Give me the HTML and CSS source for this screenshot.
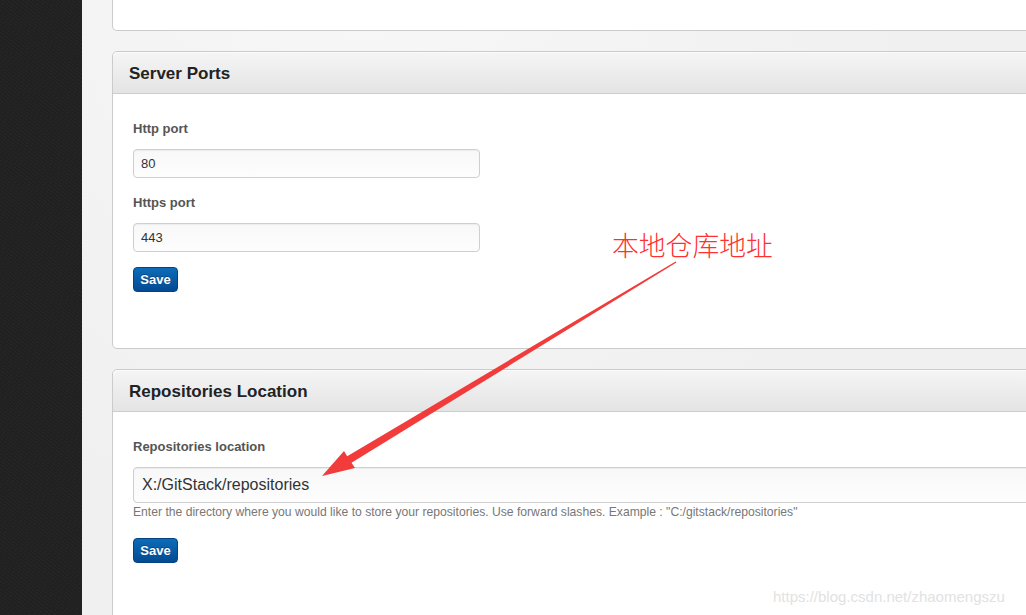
FILE: index.html
```html
<!DOCTYPE html>
<html lang="en">
<head>
    <meta charset="UTF-8">
    <title>GitStack - Settings</title>
    <link rel="stylesheet" href="styles.css">
</head>
<body>

    <div class="sidebar"></div>

    <div class="main">
        <!-- bottom of the previous panel -->
        <div class="panel panel-cut"></div>

        <div class="panel">
            <div class="panel-header">Server Ports</div>
            <div class="panel-body">
                <label class="field-label">Http port</label>
                <input class="field" type="text" value="80">
                <label class="field-label">Https port</label>
                <input class="field" type="text" value="443">
                <button class="button">Save</button>
            </div>
        </div>

        <div class="panel">
            <div class="panel-header">Repositories Location</div>
            <div class="panel-body">
                <label class="field-label">Repositories location</label>
                <input class="field field-large" type="text" value="X:/GitStack/repositories">
                <p class="help">Enter the directory where you would like to store your repositories. Use forward slashes. Example : "C:/gitstack/repositories"</p>
                <button class="button">Save</button>
            </div>
        </div>
    </div>

    <!-- screenshot annotation -->
    <div class="note">本地仓库地址</div>
    <svg class="arrow" width="1026" height="615" viewBox="0 0 1026 615">
        <polygon fill="#f23b3b" points="322,476 355,468 351.5,462.8 676.4,262.6 675.6,261.4 347.2,456.2 344,451"/>
    </svg>
    <div class="watermark">https://blog.csdn.net/zhaomengszu</div>

</body>
</html>
```

FILE: styles.css
```css
body {
    font-family: 'Liberation Sans', Arial, sans-serif;
    margin: 0;
    height: 100vh;
    display: flex;
    overflow: hidden;
    background-color: #f1f1f1;
}

.sidebar {
    width: 82px;
    flex-shrink: 0;
    background-color: #222;
    background-image:
        repeating-linear-gradient(37deg, rgba(255,255,255,0.018) 0 1px, transparent 1px 3px),
        repeating-linear-gradient(-61deg, rgba(0,0,0,0.08) 0 1px, transparent 1px 2px);
}

.main {
    flex: 1;
    padding-left: 30px;
    overflow: hidden;
    background: radial-gradient(circle at 30% 0, #f7f7f7, #f0f0f0 60%);
}

.panel {
    width: 1000px;
    background-color: #fff;
    border: 1px solid #cbcbcb;
    border-radius: 5px;
    margin-bottom: 20px;
}

.panel-cut {
    height: 30px;
    border-top: none;
    border-top-left-radius: 0;
    border-top-right-radius: 0;
}

.panel-header {
    height: 41px;
    line-height: 43px;
    padding-left: 16px;
    border-bottom: 1px solid #cdcdcd;
    border-radius: 5px 5px 0 0;
    background: linear-gradient(#f5f5f5, #e4e4e4);
    box-shadow: inset 0 1px 0 #fbfbfb;
    font-size: 17px;
    font-weight: bold;
    color: #222;
}

.panel-body {
    padding: 26px 20px 56px 20px;
}

.field-label {
    display: block;
    font-size: 13px;
    line-height: 18px;
    font-weight: bold;
    color: #555;
    margin-bottom: 11px;
}

.field {
    display: block;
    box-sizing: border-box;
    width: 347px;
    height: 29px;
    padding: 0 7px;
    margin: 0 0 16px 0;
    border: 1px solid #cfcfcf;
    border-radius: 4px;
    background: linear-gradient(#f8f8f8, #fdfdfd);
    box-shadow: inset 0 1px 1px rgba(0, 0, 0, 0.05);
    font-family: 'Liberation Sans', Arial, sans-serif;
    font-size: 13px;
    color: #333;
}

.field-large {
    width: 95%;
    height: 36px;
    padding: 0 8px;
    margin-bottom: 1px;
    font-size: 16px;
}

.help {
    margin: 0 0 18px 0;
    font-size: 12.15px;
    line-height: 16px;
    color: #777;
}

.button {
    display: block;
    width: 45px;
    height: 25px;
    padding: 0;
    border: 1px solid #04437f;
    border-radius: 4px;
    background: linear-gradient(#0c6cb9, #044a92);
    color: #fff;
    font-family: 'Liberation Sans', Arial, sans-serif;
    font-size: 13px;
    font-weight: bold;
    text-shadow: 0 -1px 0 rgba(0, 0, 0, 0.3);
    cursor: pointer;
}

.field + .button {
    margin-top: -1px;
}

.button:hover {
    background: #044a92;
}

.note {
    position: absolute;
    left: 612px;
    top: 225px;
    font-family: 'Noto Sans CJK SC', sans-serif;
    font-size: 26.8px;
    font-weight: 300;
    color: #ff3030;
}

.arrow {
    position: absolute;
    left: 0;
    top: 0;
    pointer-events: none;
}

.watermark {
    position: absolute;
    left: 773px;
    top: 588px;
    font-family: 'Liberation Sans', Arial, sans-serif;
    font-size: 15px;
    color: #e2e2e2;
}
```
